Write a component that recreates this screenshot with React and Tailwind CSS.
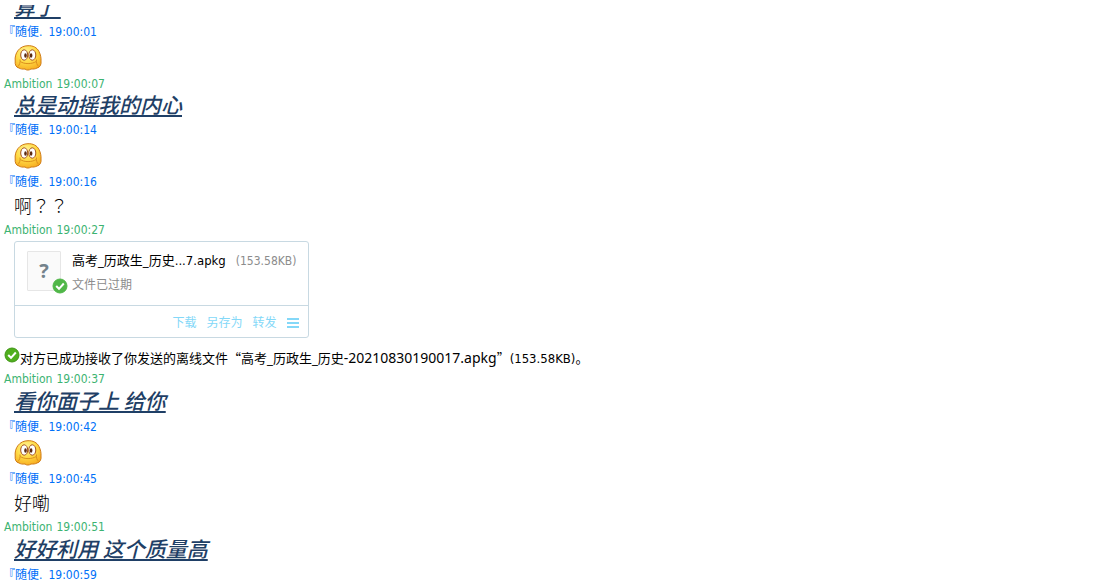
import React from "react";

const uiFont = "font-['DejaVu_Sans_Condensed','Noto_Sans_CJK_SC',sans-serif]";

function Stamp({ mine, time }) {
  return (
    <div
      className={`flex text-[12px] leading-4 ${
        mine ? "gap-1 pl-1 text-[#3cb371]" : "gap-1.5 pl-[3px] text-[#0070f8]"
      }`}
    >
      <span>{mine ? "Ambition" : "『随便."}</span>
      <time>{time}</time>
    </div>
  );
}

function Styled({ children, compact }) {
  return (
    <p
      className={`pb-1.5 pl-3.5 font-['Noto_Sans_CJK_SC',sans-serif] text-[21px] font-medium whitespace-pre text-[#1f3f66] italic underline decoration-2 underline-offset-2 ${
        compact ? "leading-6" : "leading-[26px]"
      }`}
    >
      {children}
    </p>
  );
}

function Plain({ children }) {
  return (
    <p
      lang="zh-TW"
      className="pb-0.5 pl-3.5 font-['Noto_Sans_CJK_TC',sans-serif] text-[18px] leading-[30px] font-light text-black"
    >
      {children}
    </p>
  );
}

function Emoji() {
  return (
    <div className="flex h-9 items-center pl-3.5">
      <svg width="28" height="28" viewBox="0 0 28 28" role="img" aria-label="smile">
        <defs>
          <radialGradient id="face" cx="0.42" cy="0.28" r="0.75">
            <stop offset="0" stopColor="#fff59c" />
            <stop offset="0.5" stopColor="#ffdc48" />
            <stop offset="1" stopColor="#f7ad20" />
          </radialGradient>
        </defs>
        <path
          d="M14 1.700C19 1.500 23 3.500 25 7.500C26.500 10.500 27.300 14 27 17C27.500 20.500 26 23.500 23 24C21.500 25 19 25.200 17 25C15 26.400 12.500 26.400 11 25C8.500 25.300 6.500 25 5 24C2 23.500 .8 20.500 1.200 17C.7 13 2 9 4 6.500C6.500 3.200 10 1.800 14 1.700Z"
          fill="url(#face)"
          stroke="#cf7a16"
        />
        <path
          d="M6 15.500C6.500 18.500 5.500 21 3.800 22.500M22.500 15.500C22 18.500 23 21 24.500 22.300M6.300 17.500C10 20.300 18 20.300 22.200 17.500"
          fill="none"
          stroke="#dc901c"
        />
        <ellipse cx="10.200" cy="11" rx="3.500" ry="5.200" fill="#fff" stroke="#a4521c" />
        <ellipse cx="18.300" cy="11" rx="3.500" ry="5.200" fill="#fff" stroke="#a4521c" />
        <ellipse cx="11.500" cy="11.500" rx="1.300" ry="2.300" fill="#5a2a12" />
        <ellipse cx="17.100" cy="11.500" rx="1.300" ry="2.300" fill="#5a2a12" />
      </svg>
    </div>
  );
}

function Check({ className, color, edge }) {
  return (
    <svg className={className} width="16" height="16" viewBox="0 0 16 16" aria-hidden="true">
      <circle cx="8" cy="8" r="7" fill={color} stroke={edge} />
      <path d="M4.200 8L7 10.800L11.800 5.500" fill="none" stroke="#fff" strokeWidth="2" />
    </svg>
  );
}

function FileCard() {
  return (
    <section className="mt-[3px] ml-3.5 w-fit rounded-[3px] border border-[#c8d9e2]">
      <div className="flex h-16 gap-[11px] border-b border-[#c8d9e2] pt-[9px] pr-3 pl-3">
        <div className="relative flex h-10 w-[34px] items-center justify-center rounded-[1px] border border-[#e6e6e6] bg-[#fafafa]">
          <span className="font-['Open_Sans',sans-serif] text-[20px] font-bold text-[#74838c]">?</span>
          <Check className="absolute -right-2 -bottom-1" color="#50b748" edge="#50b748" />
        </div>
        <div>
          <div className="flex items-center gap-2.5 leading-5 whitespace-nowrap">
            <span className="text-[13px] text-black">高考_历政生_历史...7.apkg</span>
            <span className="text-[12px] text-[#8c8c8c]">(153.58KB)</span>
          </div>
          <p className="mt-1 text-[12px] leading-5 text-[#8c8c8c]">文件已过期</p>
        </div>
      </div>
      <div className="flex h-[31px] items-center justify-end gap-2.5 pt-0.5 pr-2 text-[12px] text-[#84d8f8]">
        <button type="button">下载</button>
        <button type="button">另存为</button>
        <button type="button">转发</button>
        <button type="button" aria-label="更多">
          <svg width="14" height="12" viewBox="0 0 14 12" aria-hidden="true">
            <path d="M1 2H13M1 6H13M1 10H13" stroke="#84d8f8" strokeWidth="2" />
          </svg>
        </button>
      </div>
    </section>
  );
}

export default function App() {
  return (
    <main lang="zh-CN" className={`min-h-screen bg-white pt-[5px] ${uiFont}`}>
      <div className="flex h-[19px] flex-col justify-end overflow-hidden">
        <Styled compact>{"算了 "}</Styled>
      </div>
      <Stamp time="19:00:01" />
      <Emoji />
      <Stamp mine time="19:00:07" />
      <Styled compact>总是动摇我的内心</Styled>
      <Stamp time="19:00:14" />
      <Emoji />
      <Stamp time="19:00:16" />
      <Plain>啊？？</Plain>
      <Stamp mine time="19:00:27" />
      <FileCard />
      <div className="flex h-[33px] items-center pt-2 pl-1 text-[13px] text-black">
        <Check className="mb-2 shrink-0" color="#4fae1d" edge="#3f9615" />
        <p className="leading-5">
          对方已成功接收了你发送的离线文件
          <span className="font-['Noto_Sans_CJK_SC',sans-serif]">“</span>
          高考_历政生_历史
          <span className="font-['Noto_Sans',sans-serif] text-[14px]">-20210830190017.apkg</span>
          <span className="font-['Noto_Sans_CJK_SC',sans-serif]">”</span>
          (153.58KB)。
        </p>
      </div>
      <Stamp mine time="19:00:37" />
      <Styled>看你面子上 给你</Styled>
      <Stamp time="19:00:42" />
      <Emoji />
      <Stamp time="19:00:45" />
      <Plain>好嘞</Plain>
      <Stamp mine time="19:00:51" />
      <Styled>好好利用 这个质量高</Styled>
      <Stamp time="19:00:59" />
    </main>
  );
}
